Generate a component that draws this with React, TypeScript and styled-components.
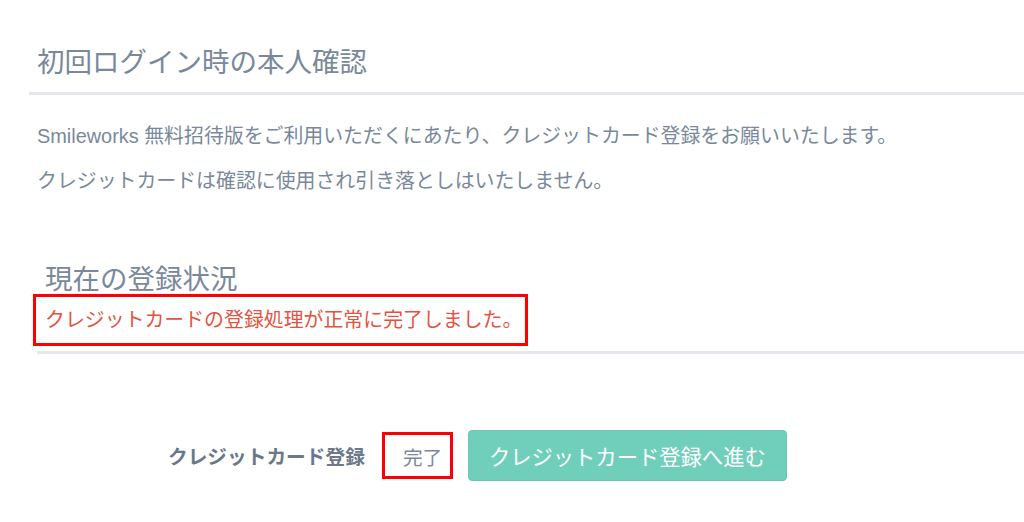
import styled, { createGlobalStyle } from "styled-components";

const GlobalStyle = createGlobalStyle`
  html, body {
    margin: 0;
    padding: 0;
    background: #ffffff;
  }

  body {
    font-family: "Liberation Sans", "Noto Sans CJK JP", sans-serif;
    color: #7a889b;
  }
`;

const Page = styled.div`
  width: 1024px;
  height: 522px;
  overflow: hidden;
  background: #ffffff;
`;

const Header = styled.div`
  margin-left: 29px;
  border-bottom: 3px solid #e4e8ee;
`;

const Title = styled.h1`
  margin: 0;
  padding: 46px 0 13px 8px;
  font-size: 27.5px;
  line-height: 33px;
  font-weight: normal;
  color: #7a889b;
`;

const Intro = styled.div`
  padding: 27px 0 0 37px;
`;

const Text = styled.p`
  margin: 0 0 16px;
  font-size: 19.9px;
  line-height: 29px;
  color: #7a889b;
`;

const Status = styled.div`
  margin: 70px 0 0 37px;
  padding-bottom: 5px;
  border-bottom: 3px solid #e4e8ee;
`;

const SubTitle = styled.h2`
  margin: 0;
  padding-left: 8px;
  font-size: 27.5px;
  line-height: 28px;
  font-weight: normal;
  color: #7a889b;
`;

const Notice = styled.div`
  box-sizing: border-box;
  width: 495px;
  height: 52px;
  margin-left: -4px;
  padding: 9px 0 0 9px;
  border: 3px solid #ff0000;
  font-size: 19.9px;
  line-height: 29px;
  color: #e5533f;
`;

const ActionRow = styled.div`
  display: flex;
  align-items: center;
  padding: 76px 0 0 168px;
`;

const Label = styled.span`
  font-size: 19.7px;
  font-weight: bold;
  color: #6b788a;
  margin-right: 17px;
`;

const StateBox = styled.div`
  box-sizing: border-box;
  display: flex;
  align-items: center;
  flex-shrink: 0;
  width: 71px;
  height: 47px;
  padding: 2px 0 0 18px;
  border: 3px solid #ff0000;
  font-size: 19.7px;
  color: #7a889b;
  margin-right: 15px;
`;

const ProceedButton = styled.button`
  box-sizing: border-box;
  height: 51px;
  padding: 0 20px;
  border: 1px solid #66c9b4;
  border-radius: 4px;
  background: #6fcfba;
  color: #ffffff;
  font-family: "Liberation Sans", "Noto Sans CJK JP", sans-serif;
  font-size: 21.3px;
  cursor: pointer;
`;

export default function App() {
  return (
    <Page>
      <GlobalStyle />
      <Header>
        <Title>初回ログイン時の本人確認</Title>
      </Header>

      <Intro>
        <Text>Smileworks 無料招待版をご利用いただくにあたり、クレジットカード登録をお願いいたします。</Text>
        <Text>クレジットカードは確認に使用され引き落としはいたしません。</Text>
      </Intro>

      <Status>
        <SubTitle>現在の登録状況</SubTitle>
        <Notice>クレジットカードの登録処理が正常に完了しました。</Notice>
      </Status>

      <ActionRow>
        <Label>クレジットカード登録</Label>
        <StateBox>完了</StateBox>
        <ProceedButton>クレジットカード登録へ進む</ProceedButton>
      </ActionRow>
    </Page>
  );
}
